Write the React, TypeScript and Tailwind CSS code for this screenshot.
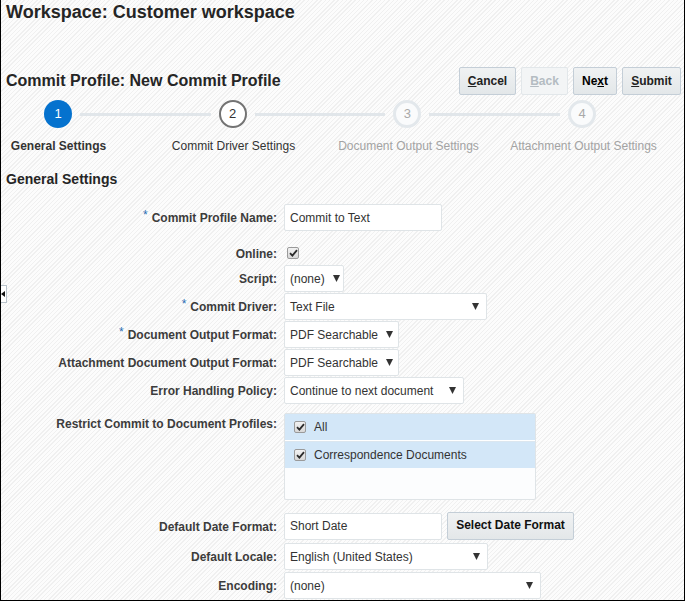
import React from "react";

const font = { fontFamily: '"Liberation Sans", Arial, sans-serif' };

function Check() {
  return (
    <span className="inline-flex h-[12px] w-[12px] items-center justify-center rounded-[2px] border border-[#9a9a9a] bg-gradient-to-b from-[#f2f2f2] to-[#d8d8d8]">
      <svg width="9" height="8" viewBox="0 0 9 8">
        <path d="M1 4.2 L3.4 6.6 L8 1.2" fill="none" stroke="#2b2b2b" strokeWidth="1.8" />
      </svg>
    </span>
  );
}

function Arrow() {
  return (
    <svg width="7" height="7" viewBox="0 0 7 7" className="shrink-0">
      <path d="M0 0 L7 0 L3.5 7 Z" fill="#333" />
    </svg>
  );
}

function Label({ text, req, top }: { text: string; req?: boolean; top?: boolean }) {
  return (
    <div
      className={`w-[271px] shrink-0 text-right text-[12px] font-bold text-[#3c3c3c] ${top ? "self-start pt-[2px]" : "pt-[1px]"}`}
    >
      {req && <span className="relative top-[-3px] mr-[4px] font-normal text-[#2a6cb3]">*</span>}
      {text}
    </div>
  );
}

function Select({ value, w }: { value: string; w: string }) {
  return (
    <div
      className={`${w} ml-[7px] flex h-[27px] items-center justify-between gap-[8px] rounded-[2px] border border-[#dfe4e7] bg-white pl-[5px] pr-[7px] text-[12px] text-[#333]`}
    >
      <span className="whitespace-nowrap">{value}</span>
      <Arrow />
    </div>
  );
}

function Input({ value }: { value: string }) {
  return (
    <div className="ml-[7px] flex h-[27px] w-[158px] items-center rounded-[2px] border border-[#dfe4e7] bg-white pl-[5px] text-[12px] text-[#333]">
      {value}
    </div>
  );
}

function Btn({ children, w, disabled }: { children: React.ReactNode; w: string; disabled?: boolean }) {
  return (
    <div
      className={`${w} flex h-[28px] items-center justify-center rounded-[2px] border text-[12px] font-bold ${
        disabled
          ? "border-[#e2e7ea] bg-[#f3f5f6] text-[#b4bcc2]"
          : "border-[#c4ced7] bg-gradient-to-b from-[#f0f2f3] to-[#e3e7e9] text-[#222]"
      }`}
    >
      {children}
    </div>
  );
}

export default function App() {
  return (
    <div
      style={font}
      className="relative h-[601px] w-[685px] overflow-hidden border-b border-l border-r border-black bg-[repeating-linear-gradient(-45deg,#fcfcfc_0px,#fcfcfc_2px,#f0f0f0_2px,#f0f0f0_3px)] pl-[5px]"
    >
      {/* collapse tab */}
      <div className="absolute left-0 top-[285px] flex h-[18px] w-[6px] items-center justify-start border border-l-0 border-[#b8c2ca] bg-white">
        <svg width="4" height="6" viewBox="0 0 4 6">
          <path d="M4 0 L0 3 L4 6 Z" fill="#111" />
        </svg>
      </div>

      <div className="pt-[1px] text-[18px] font-bold leading-[22px] text-[#252525]">Workspace: Customer workspace</div>

      <div className="mt-[44px] flex h-[28px] items-center justify-between pr-[3px]">
        <div className="text-[16px] font-bold text-[#252525]">Commit Profile: New Commit Profile</div>
        <div className="flex gap-[5px]">
          <Btn w="w-[57px]">
            <span className="underline">C</span>ancel
          </Btn>
          <Btn w="w-[47px]" disabled>
            <span className="underline">B</span>ack
          </Btn>
          <Btn w="w-[44px]">
            <span className="text-black">
              Ne<span className="underline">x</span>t
            </span>
          </Btn>
          <Btn w="w-[59px]">
            <span className="underline">S</span>ubmit
          </Btn>
        </div>
      </div>

      {/* stepper */}
      <div className="ml-[38px] mt-[5px] flex w-[552px] items-center">
        <div className="flex h-[28px] w-[28px] shrink-0 items-center justify-center rounded-full bg-[#0572ce] text-[13px] text-white">
          1
        </div>
        <div className="mx-[8px] h-[3px] flex-1 bg-[#e1e6ea]" />
        <div className="flex h-[28px] w-[28px] shrink-0 items-center justify-center rounded-full border-2 border-[#737373] bg-white text-[13px] text-[#333]">
          2
        </div>
        <div className="mx-[8px] h-[3px] flex-1 bg-[#e1e6ea]" />
        <div className="flex h-[28px] w-[28px] shrink-0 items-center justify-center rounded-full border-[3px] border-[#e3e8ec] bg-[#fafbfc] text-[13px] text-[#a9a9a9]">
          3
        </div>
        <div className="mx-[8px] h-[3px] flex-1 bg-[#e1e6ea]" />
        <div className="flex h-[28px] w-[28px] shrink-0 items-center justify-center rounded-full border-[3px] border-[#e3e8ec] bg-[#fafbfc] text-[13px] text-[#a9a9a9]">
          4
        </div>
      </div>
      <div className="ml-[-35px] mt-[10px] flex text-[12px] leading-[16px]">
        <div className="w-[175px] shrink-0 text-center font-bold text-[#333]">General Settings</div>
        <div className="w-[175px] shrink-0 text-center text-[#333]">Commit Driver Settings</div>
        <div className="w-[175px] shrink-0 text-center text-[#a3a3a3]">Document Output Settings</div>
        <div className="w-[175px] shrink-0 text-center text-[#a3a3a3]">Attachment Output Settings</div>
      </div>

      <div className="mt-[16px] text-[14px] font-bold leading-[18px] text-[#252525]">General Settings</div>

      {/* form */}
      <div className="mt-[16px] flex items-center">
        <Label text="Commit Profile Name:" req />
        <Input value="Commit to Text" />
      </div>
      <div className="mt-[11px] flex h-[22px] items-center">
        <Label text="Online:" />
        <div className="ml-[10px] flex items-center">
          <Check />
        </div>
      </div>
      <div className="mt-[1px] flex items-center">
        <Label text="Script:" />
        <Select value="(none)" w="w-[60px]" />
      </div>
      <div className="mt-[1px] flex items-center">
        <Label text="Commit Driver:" req />
        <Select value="Text File" w="w-[203px]" />
      </div>
      <div className="mt-[1px] flex items-center">
        <Label text="Document Output Format:" req />
        <Select value="PDF Searchable" w="w-[115px]" />
      </div>
      <div className="mt-[1px] flex items-center">
        <Label text="Attachment Document Output Format:" />
        <Select value="PDF Searchable" w="w-[115px]" />
      </div>
      <div className="mt-[1px] flex items-center">
        <Label text="Error Handling Policy:" />
        <Select value="Continue to next document" w="w-[180px]" />
      </div>

      <div className="mt-[9px] flex">
        <Label text="Restrict Commit to Document Profiles:" top />
        <div className="ml-[7px] h-[87px] w-[252px] rounded-[2px] border border-[#dfe4e7] bg-[#fcfdfe] text-[12px] text-[#333]">
          <div className="flex h-[26px] items-center gap-[8px] bg-[#d3e7f8] pl-[9px]">
            <Check />
            <span>All</span>
          </div>
          <div className="h-[1px] bg-white" />
          <div className="h-[1px] bg-[#dbe6ef]" />
          <div className="flex h-[26px] items-center gap-[8px] bg-[#d3e7f8] pl-[9px]">
            <Check />
            <span>Correspondence Documents</span>
          </div>
        </div>
      </div>

      <div className="mt-[12px] flex items-center">
        <Label text="Default Date Format:" />
        <Input value="Short Date" />
        <div className="ml-[5px] flex h-[28px] w-[127px] items-center justify-center rounded-[2px] border border-[#c4ced7] bg-gradient-to-b from-[#f0f2f3] to-[#e3e7e9] pb-[2px] text-[12px] font-bold text-[#111]">
          Select Date Format
        </div>
      </div>
      <div className="mt-[3px] flex items-center">
        <Label text="Default Locale:" />
        <Select value="English (United States)" w="w-[204px]" />
      </div>
      <div className="mt-[2px] flex items-center">
        <Label text="Encoding:" />
        <Select value="(none)" w="w-[257px]" />
      </div>
    </div>
  );
}
